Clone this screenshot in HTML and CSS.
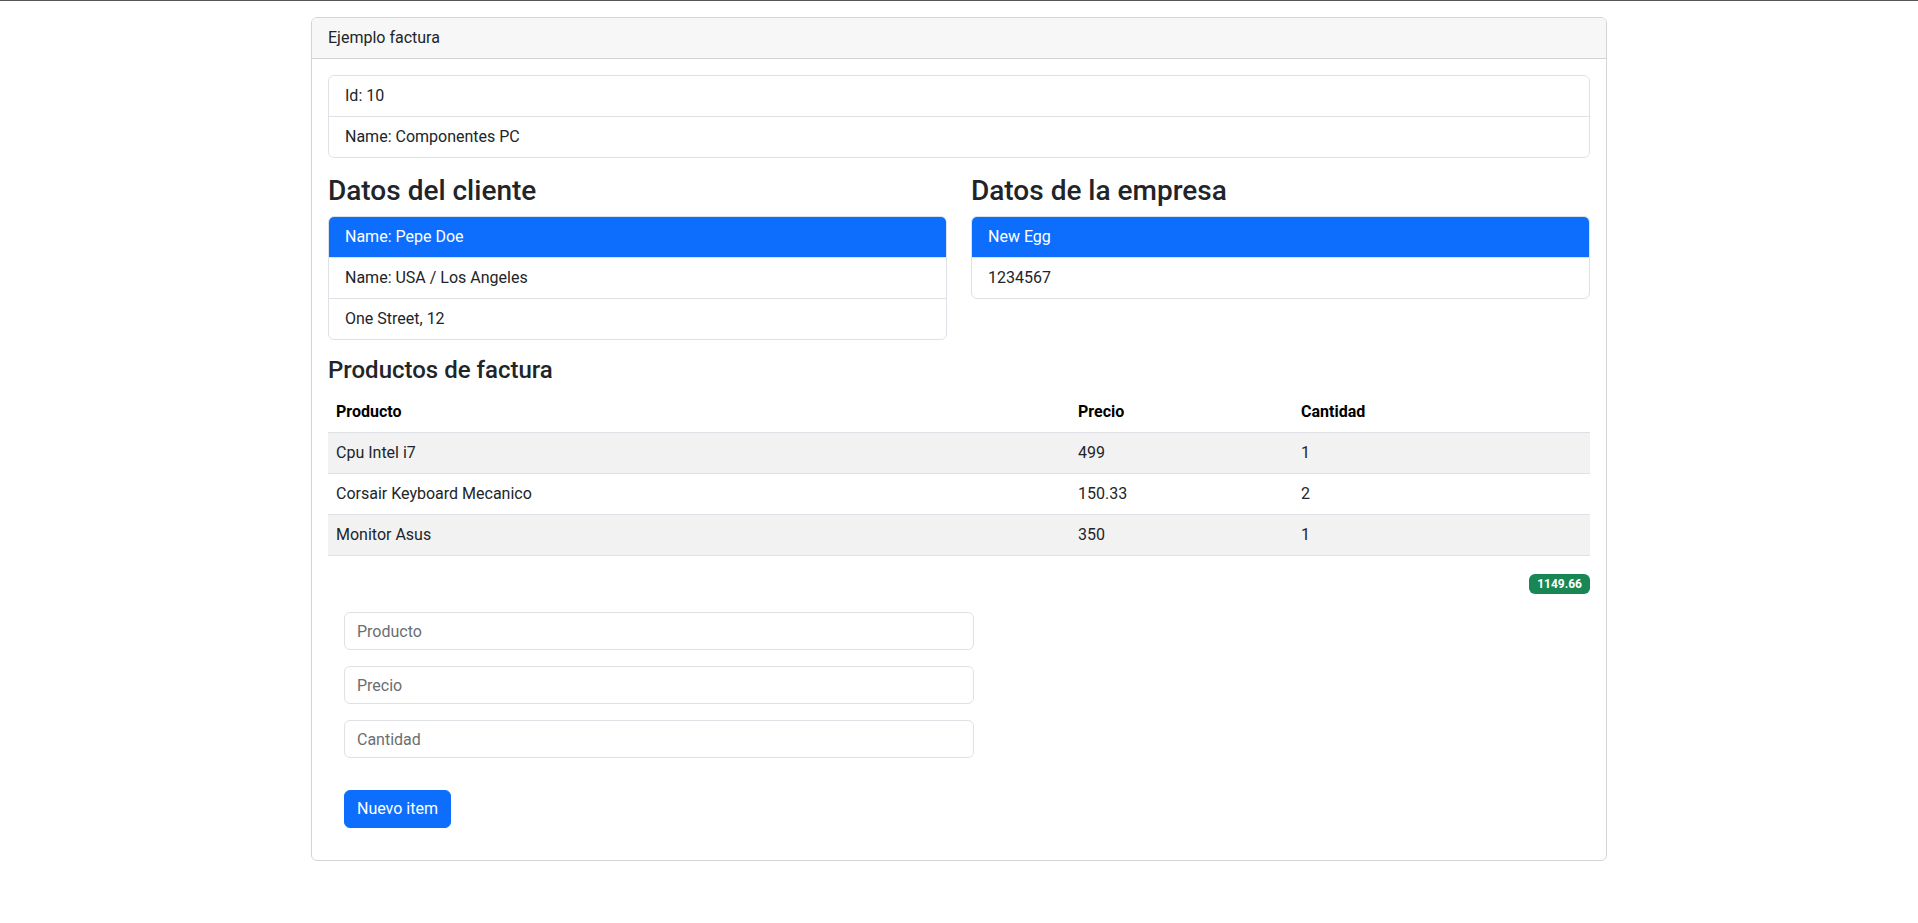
FILE: index.html
```html
<!DOCTYPE html>
<html lang="es">
<head>
<meta charset="utf-8">
<title>Ejemplo factura</title>
<link rel="stylesheet" href="styles.css">
</head>
<body>
<div class="topline"></div>
<div class="container">
  <div class="card">
    <div class="card-header">Ejemplo factura</div>
    <div class="card-body">
      <ul class="list-group">
        <li class="list-item">Id: 10</li>
        <li class="list-item">Name: Componentes PC</li>
      </ul>
      <div class="row">
        <div class="col">
          <h3 class="h3">Datos del cliente</h3>
          <ul class="list-group">
            <li class="list-item active">Name: Pepe Doe</li>
            <li class="list-item">Name: USA / Los Angeles</li>
            <li class="list-item">One Street, 12</li>
          </ul>
        </div>
        <div class="col">
          <h3 class="h3">Datos de la empresa</h3>
          <ul class="list-group">
            <li class="list-item active">New Egg</li>
            <li class="list-item">1234567</li>
          </ul>
        </div>
      </div>
      <h4 class="h4">Productos de factura</h4>
      <table class="table">
        <colgroup>
          <col class="c-prod">
          <col class="c-price">
          <col class="c-qty">
        </colgroup>
        <thead>
          <tr><th>Producto</th><th>Precio</th><th>Cantidad</th></tr>
        </thead>
        <tbody>
          <tr class="striped"><td>Cpu Intel i7</td><td>499</td><td>1</td></tr>
          <tr><td>Corsair Keyboard Mecanico</td><td>150.33</td><td>2</td></tr>
          <tr class="striped"><td>Monitor Asus</td><td>350</td><td>1</td></tr>
        </tbody>
      </table>
      <div class="total"><span class="badge">1149.66</span></div>
      <form class="item-form">
        <input class="form-control" type="text" placeholder="Producto">
        <input class="form-control" type="text" placeholder="Precio">
        <input class="form-control" type="text" placeholder="Cantidad">
        <button class="btn" type="button">Nuevo item</button>
      </form>
    </div>
  </div>
</div>
</body>
</html>
```

FILE: styles.css
```css
* { box-sizing: border-box; }
html, body { margin: 0; padding: 0; }
body {
  font-family: Roboto, "Segoe UI", "Liberation Sans", sans-serif;
  font-size: 16px;
  line-height: 1.5;
  color: #212529;
  background: #fff;
}
.topline { height: 1px; background: #555; }
.container {
  width: 1320px;
  margin: 16px auto 0;
  padding: 0 12px;
}
.card {
  border: 1px solid #d3d4d5;
  border-radius: 6px;
  overflow: hidden;
}
.card-header {
  padding: 8px 16px;
  background: #f7f7f7;
  border-bottom: 1px solid #d3d4d5;
}
.card-body { padding: 16px; }
.list-group {
  list-style: none;
  margin: 0;
  padding: 0;
  border: 1px solid #dee2e6;
  border-radius: 6px;
  overflow: hidden;
}
.list-item {
  padding: 8px 16px;
  border-top: 1px solid #dee2e6;
}
.list-item:first-child { border-top: 0; }
.list-item.active {
  background: #0d6efd;
  color: #fff;
  border-color: #0d6efd;
}
.row {
  display: flex;
  gap: 24px;
  margin-top: 16px;
}
.col { flex: 1 1 0; min-width: 0; }
.h3 {
  font-size: 28px;
  font-weight: 500;
  line-height: 1.2;
  margin: 0 0 8px;
}
.h4 {
  font-size: 24px;
  font-weight: 500;
  line-height: 1.2;
  margin: 16px 0 8px;
}
.table {
  width: 100%;
  border-collapse: collapse;
  margin-bottom: 16px;
  table-layout: fixed;
}
.c-prod { width: 742px; }
.c-price { width: 223px; }
.table th, .table td {
  text-align: left;
  padding: 8px;
  border-bottom: 1px solid #dee2e6;
  vertical-align: top;
}
.table th { font-weight: 700; color: #000; }
.table td { color: #212529; }
.striped td { background: #f2f2f2; }
.total { text-align: right; }
.badge {
  display: inline-block;
  background: #198754;
  color: #fff;
  font-size: 12px;
  font-weight: 700;
  line-height: 1;
  padding: 4px 8px;
  border-radius: 6px;
  vertical-align: 1px;
}
.item-form {
  padding: 16px;
  display: flex;
  flex-direction: column;
  align-items: flex-start;
}
.form-control {
  display: block;
  width: 630px;
  height: 38px;
  padding: 6px 12px;
  margin: 0 0 16px;
  font: inherit;
  color: #212529;
  background: #fff;
  border: 1px solid #dee2e6;
  border-radius: 6px;
}
.form-control::placeholder { color: #6b6e71; }
.btn {
  margin-top: 16px;
  height: 38px;
  padding: 6px 12px;
  font: inherit;
  color: #fff;
  background: #0d6efd;
  border: 1px solid #0d6efd;
  border-radius: 6px;
}
```
